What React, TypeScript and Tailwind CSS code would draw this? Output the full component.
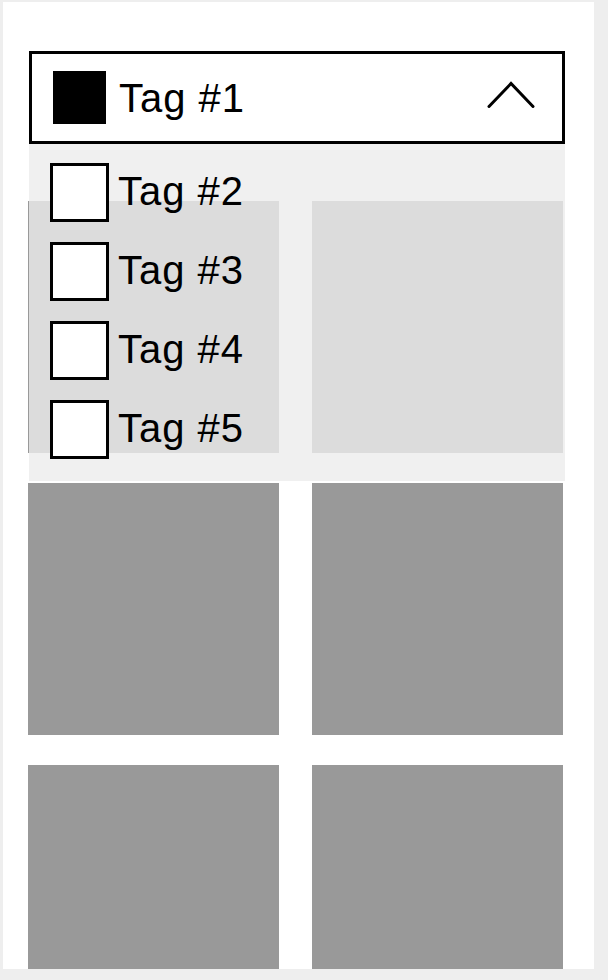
import { useState } from "react";

const TAGS = ["Tag #2", "Tag #3", "Tag #4", "Tag #5"];
const TILES = [0, 1, 2, 3, 4, 5];

export default function App() {
  const [open] = useState(true);

  return (
    <div
      className="h-[980px] w-[608px] bg-[#eeeeee] pt-[2px] pl-[3px] pr-[14px] overflow-hidden"
      style={{ fontFamily: '"Liberation Sans", Arial, sans-serif' }}
    >
      <div className="h-[967px] bg-white overflow-hidden pl-[25px] pr-[29px] pt-[49px]">
        {/* Dropdown */}
        <div className="relative z-10 ml-[1px]">
          <div className="flex h-[93px] items-center border-[3px] border-black bg-white pl-[21px] pr-[27px]">
            <div className="h-[53px] w-[53px] bg-black" />
            <span className="ml-[13px] text-[40px] leading-none tracking-[1px] text-black">Tag #1</span>
            <svg className="ml-auto -mt-[6px]" width="48" height="27" viewBox="0 0 48 27" fill="none">
              <polyline points="2,25.5 24,2.5 46,25.5" stroke="black" strokeWidth="3" strokeLinecap="round" strokeLinejoin="miter" />
            </svg>
          </div>
          {open && (
            <div className="absolute left-0 right-0 top-[93px] flex flex-col gap-[20px] bg-[#ececec]/80 pl-[21px] pt-[19px] pb-[22px]">
              {TAGS.map((t) => (
                <div key={t} className="flex items-center">
                  <div className="h-[59px] w-[59px] border-[3px] border-black bg-white" />
                  <span className="ml-[9px] -mt-[4px] text-[40px] leading-none tracking-[1px] text-black">{t}</span>
                </div>
              ))}
            </div>
          )}
        </div>

        {/* Grid */}
        <div className="mt-[57px] grid grid-cols-[251px_251px] gap-x-[33px] gap-y-[30px]">
          {TILES.map((i) => (
            <div key={i} className="h-[252px] bg-[#999999]" />
          ))}
        </div>
      </div>
    </div>
  );
}
